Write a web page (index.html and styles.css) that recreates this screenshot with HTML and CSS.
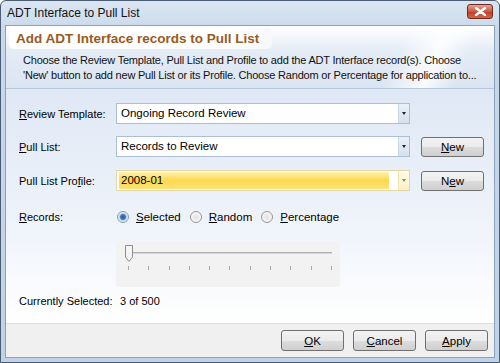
FILE: index.html
```html
<!DOCTYPE html>
<html>
<head>
<meta charset="utf-8">
<link rel="stylesheet" href="styles.css">
</head>
<body>
<div class="window">
  <div class="titlebar">
    <span class="title">ADT Interface to Pull List</span>
    <span class="close"><svg width="13" height="9" viewBox="0 0 13 9"><path d="M2 1 L11 8 M11 1 L2 8" stroke="#fff" stroke-width="2.4" stroke-linecap="round"/></svg></span>
  </div>
  <div class="client">
    <div class="header">
      <div class="heading">Add ADT Interface records to Pull List</div>
      <div class="desc">
        <div class="line">Choose the Review Template, Pull List and Profile to add the ADT Interface record(s). Choose</div>
        <div class="line">'New' button to add new Pull List or its Profile. Choose Random or Percentage for application to...</div>
      </div>
    </div>
    <div class="main">
      <div class="row r1">
        <label class="lbl"><u>R</u>eview Template:</label>
        <div class="combo"><span class="val">Ongoing Record Review</span><span class="drop"><i></i></span></div>
      </div>
      <div class="row r2">
        <label class="lbl"><u>P</u>ull List:</label>
        <div class="combo"><span class="val">Records to Review</span><span class="drop"><i></i></span></div>
        <button class="btn new"><u>N</u>ew</button>
      </div>
      <div class="row r3">
        <label class="lbl">Pull List Pro<u>f</u>ile:</label>
        <div class="combo hot"><span class="val">2008-01</span><span class="drop"><i></i></span></div>
        <button class="btn new">N<u>e</u>w</button>
      </div>
      <div class="row r4">
        <label class="lbl"><u>R</u>ecords:</label>
        <div class="radios">
          <span class="radio on"><b></b><u>S</u>elected</span>
          <span class="radio"><b></b><u>R</u>andom</span>
          <span class="radio"><b></b><u>P</u>ercentage</span>
        </div>
      </div>
      <div class="sliderrow">
        <div class="slider">
          <div class="track"></div>
          <div class="thumb"><svg width="10" height="19" viewBox="0 0 10 19"><path d="M1.5 1.5 H8.5 V13 L5 17.5 L1.5 13 Z" fill="#f4f4f4" stroke="#8d8d8d"/></svg></div>
          <div class="ticks"><i></i><i></i><i></i><i></i><i></i><i></i><i></i><i></i><i></i><i></i><i></i></div>
        </div>
      </div>
      <div class="row r5">
        <span class="lbl">Currently Selected:</span><span class="count">3 of 500</span>
      </div>
    </div>
    <div class="footer">
      <button class="btn"><u>O</u>K</button>
      <button class="btn"><u>C</u>ancel</button>
      <button class="btn"><u>A</u>pply</button>
    </div>
  </div>
</div>
</body>
</html>
```
FILE: styles.css
```css
* { box-sizing: border-box; }
html, body { margin: 0; padding: 0; }
body { width: 500px; height: 363px; overflow: hidden; font-family: "Liberation Sans", Arial, sans-serif; font-size: 11px; color: #000; }
.window {
  width: 500px; height: 363px;
  background: linear-gradient(#dbe6f2, #c9d9eb 30px, #bfd2e7);
  border: 1px solid #4a5d73;
  border-radius: 6px 6px 0 0;
  padding: 0 4px 4px 4px;
  display: flex; flex-direction: column;
}
.titlebar { height: 24px; display: flex; align-items: center; justify-content: space-between; padding-left: 2px; }
.title { font-size: 12px; color: #111; }
.close {
  width: 26px; height: 15px; margin-right: 2px; margin-top: -3px;
  background: linear-gradient(#e8a495, #d0563f 50%, #c23d24 55%, #d4684d);
  border: 1px solid #6b2a1e; border-radius: 3px;
  display: flex; align-items: center; justify-content: center;
}
.client { flex: 1; display: flex; flex-direction: column; border: 1px solid #8ba0b9; background: #fff; }
.header {
  height: 63px; padding: 2px 3px 0 3px;
  background:
    linear-gradient(115deg, transparent 78%, rgba(255,255,255,.85) 86%, rgba(255,255,255,0) 92%),
    linear-gradient(#ffffff, #e4ecf6 40%, #dbe5f1);
  border-bottom: 1px solid #b8c8db;
}
.heading {
  display: inline-block; font-weight: bold; font-size: 13.5px; color: #9a5a1f;
  background: linear-gradient(90deg, #fff 85%, #f5f8fc); border-radius: 5px; padding: 3px 13px 3px 7px;
}
.desc { padding: 4px 0 0 14px; line-height: 15px; font-size: 11px; color: #111; }
.desc .line { white-space: nowrap; letter-spacing: -0.2px; }
.main { flex: 1; background: linear-gradient(#dfe8f5, #eef3fa 55%, #fff); padding: 14px 0 0 13px; }
.row { display: flex; align-items: center; }
.lbl { width: 97px; flex: none; }
.combo {
  width: 294px; height: 21px; background: #fff; border: 1px solid #abbfd6;
  display: flex; align-items: stretch;
}
.combo .val { flex: 1; padding: 2px 4px; line-height: 15px; font-size: 11.5px; }
.combo .drop { width: 11px; background: linear-gradient(#eaf0f8, #d5e1ef); border-left: 1px solid #c9d6e6; display: flex; align-items: center; justify-content: center; }
.drop i { width: 0; height: 0; border-left: 2.5px solid transparent; border-right: 2.5px solid transparent; border-top: 3px solid #222; }
.combo.hot { border-color: #e1d6a6; }
.combo.hot .val { background: linear-gradient(#fff1b0, #fbd94f 50%, #fce27a); margin: 1px 0 1px 2px; padding: 1px 2px; flex: none; width: 270px; line-height: 15px; }
.combo.hot .drop { margin-left: auto; background: linear-gradient(#fffbe6, #fdf1c0); border-left: 1px solid #f0e2a8; }
.combo.hot .drop i { border-top-color: #888; }
.r1 { height: 21px; }
.r2 { height: 21px; margin-top: 12px; }
.r3 { height: 21px; margin-top: 13px; }
.r4 { margin-top: 18px; height: 16px; }
.btn {
  font-family: "Liberation Sans", Arial, sans-serif; font-size: 11.5px; color: #000;
  width: 63px; height: 20px; padding: 0; margin-left: 11px;
  background: linear-gradient(#f3f3f3, #ebebeb 50%, #dddddd 51%, #cfcfcf);
  border: 1px solid #707070; border-radius: 3px;
}
.radios { display: flex; margin-left: 1px; }
.radio { display: flex; align-items: center; margin-right: 9px; font-size: 11.5px; }
.radio b {
  width: 12px; height: 12px; border-radius: 50%; border: 1px solid #959595; margin-right: 7px;
  background: radial-gradient(circle, #e0e0e0 0, #f7f7f7 70%);
}
.radio.on b { background: radial-gradient(circle, #2a5d93 0, #3f7fc0 2.5px, #b6d0ea 3.5px, #f3f3f3 5px); border-color: #8a9bb0; }
.sliderrow { padding-left: 97px; margin-top: 16px; }
.slider { width: 224px; height: 46px; background: #f2f2f2; position: relative; border-radius: 2px; }
.track { position: absolute; left: 12px; right: 8px; top: 11px; height: 2px; background: #d6d6d6; border-top: 1px solid #b0b0b0; }
.thumb { position: absolute; left: 8px; top: 3px; }
.ticks { position: absolute; left: 12px; right: 8px; top: 25px; display: flex; justify-content: space-between; }
.ticks i { width: 1px; height: 4px; background: #a8a8a8; }
.r5 { margin-top: 6px; height: 16px; }
.r5 .lbl { width: 101px; }
.count { font-size: 11px; }
.footer { height: 34px; background: #f0f0f0; display: flex; justify-content: flex-end; align-items: center; padding-right: 6px; border-top: 1px solid #e0e0e0; }
.footer .btn { margin-left: 9px; width: 63px; height: 21px; }
u { text-decoration: underline; text-underline-offset: 1px; }
```
